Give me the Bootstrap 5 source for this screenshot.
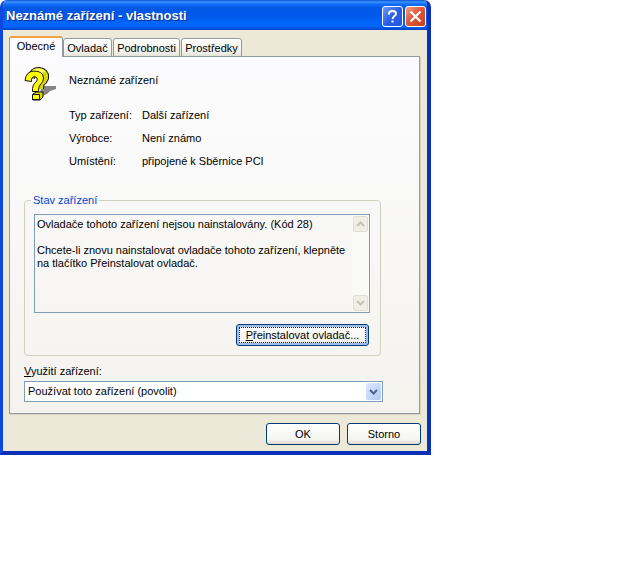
<!DOCTYPE html>
<html lang="cs">
<head>
<meta charset="utf-8">
<meta name="viewport" content="width=device-width, initial-scale=1">
<title>Neznámé zařízení - vlastnosti</title>
<link href="https://cdn.jsdelivr.net/npm/bootstrap@5.3.0/dist/css/bootstrap.min.css" rel="stylesheet">
<style>
  body { background: #fff; color: #000; font: 11px/13px "Liberation Sans", Arial, sans-serif; }
  .dialog { max-width: 431px; background: #ece9d8; border: solid #0a48e0; border-width: 0 4px 4px 3px; border-radius: 7px 7px 0 0; border-right-color: #0831b8; border-bottom-color: #0831b8; overflow: hidden; }
  .titlebar { height: 30px; margin: 0 -4px 0 -3px; padding: 2px 5px 0 6px; background: linear-gradient(#0a50d0 0, #3c94ff 2px, #1470f8 4px, #0058e6 8px, #0058ea 16px, #0068ff 24px, #0062f4 27px, #0040c4 30px); }
  .titlebar h1 { font: bold 13px/18px "Liberation Sans", sans-serif; color: #fff; text-shadow: 1px 1px #0a2c8c; }
  .cap { width: 21px; height: 21px; padding: 0; border: 1px solid #fff; border-radius: 3px; background: linear-gradient(135deg, #6e9cf8, #2a5fe6 50%, #2458d8); }
  .cap-help { margin-right: 2px; }
  .cap-close { background: linear-gradient(135deg, #f0a088, #e0583a 45%, #cc3c18); }
  .cap svg { display: block; margin: auto; }
  .client { padding: 6px; }
  .sheet-tabs { position: relative; z-index: 1; margin-bottom: -1px; }
  .sheet-tab { height: 19px; padding: 1px 0 0; border: 1px solid #919b9c; border-radius: 3px 3px 0 0; background: linear-gradient(#fff, #f0f0ea 80%, #e4e2d6); color: #000; text-align: center; width: 67px; margin-right: 1px; }
  .sheet-tab.active { height: 21px; width: 54px; margin-right: 0; padding-bottom: 3px; background: #fcfcfe; border-bottom: 0; border-top: 2px solid #f0a040; }
  .tab-s { width: 49px; }
  .tab-m { width: 61px; margin-right: 0; }
  .sheet { border: 1px solid #919b9c; background: linear-gradient(#fcfcfe, #f4f3ee); padding: 10px 36px 11px 14px; margin-right: 1px; box-shadow: 1px 1px #d8d4c4; }
  .info { margin-bottom: 26px; }
  .facts { display: grid; grid-template-columns: 73px 1fr; row-gap: 10px; margin: 22px 0 0; }
  .facts dt { font-weight: 400; }
  .facts dd { margin: 0; }
  .device { width: 45px; flex: none; }
  .device svg { display: block; }
  .device-name { padding-top: 7px; }
  .group { border: 1px solid #d0d0bf; border-radius: 4px; padding: 7px 10px 9px 9px; margin-right: 2px; }
  .group legend { float: none; width: auto; font-size: 11px; line-height: 13px; color: #0046d5; margin: 0; padding: 0 2px; margin-left: -3px; }
  .status { border: 1px solid #7f9db9; margin-bottom: 11px; }
  .status textarea { flex: 1; min-width: 0; height: 97px; padding: 3px 0 0 2px; border: 0; outline: 0; resize: none; overflow: hidden; background: transparent; color: #000; font: inherit; }
  .scroller { width: 17px; background: #fafaf7; padding: 1px; }
  .scroller button { width: 15px; height: 16px; padding: 0; border: 1px solid #e0dfd2; border-radius: 2px; background: #f0efe6; line-height: 0; }
  .push { height: 22px; width: 74px; padding: 0; border: 1px solid #003c74; border-radius: 3px; background: linear-gradient(#fff, #f3f3ef 80%, #dcd8cc); color: #000; }
  .push-focus { width: 133px; margin-right: 1px; box-shadow: inset 0 0 0 2px #a0bcec; outline: 1px dotted #222; outline-offset: -4px; }
  .usage-label { margin-top: 9px; margin-bottom: 3px; }
  .usage { display: block; height: 21px; width: 100%; appearance: none; border: 1px solid #7f9db9; border-radius: 0; background: #fff; color: #000; padding: 0 20px 0 3px; font: inherit; }
  .drop { top: 2px; right: 2px; width: 15px; height: 17px; border-radius: 2px; background: linear-gradient(135deg, #dce8ff, #b0c8f8); pointer-events: none; line-height: 0; }
  .actions { gap: 7px; padding-top: 9px; }
</style>
<script src="https://cdn.jsdelivr.net/npm/bootstrap@5.3.0/dist/js/bootstrap.bundle.min.js"></script>
</head>
<body>
<main class="dialog">
  <header class="titlebar d-flex align-items-center">
    <h1 class="m-0 me-auto">Neznámé zařízení - vlastnosti</h1>
    <div class="d-flex">
      <button type="button" class="cap cap-help" aria-label="Nápověda"><svg width="17" height="17" viewBox="0 0 17 17" fill="none" stroke="#fff" stroke-width="2"><path d="M5 6.500V5.500Q5 3 8.500 3T12 5.500Q12 7 10.500 8T8.500 11"/><path d="M8.500 12.500v2"/></svg></button>
      <button type="button" class="cap cap-close" aria-label="Zavřít"><svg width="17" height="17" viewBox="0 0 17 17" stroke="#fff" stroke-width="2.200"><path d="M3.500 3.500l10 10M13.500 3.500l-10 10"/></svg></button>
    </div>
  </header>
  <div class="client">
    <div class="sheet-tabs d-flex align-items-end" role="tablist">
      <button type="button" class="sheet-tab active" role="tab" aria-selected="true">Obecné</button>
      <button type="button" class="sheet-tab tab-s" role="tab" aria-selected="false">Ovladač</button>
      <button type="button" class="sheet-tab" role="tab" aria-selected="false">Podrobnosti</button>
      <button type="button" class="sheet-tab tab-m" role="tab" aria-selected="false">Prostředky</button>
    </div>
    <section class="sheet" role="tabpanel">
      <div class="info d-flex">
        <div class="device">
          <svg width="33" height="35" viewBox="0 0 33 35" fill="none" aria-hidden="true">
            <path d="M16 27l1-6 4-2h11v3l-6 2-3 3-5 2z" fill="#858585"/>
            <path d="M7 11Q9 4 15 4Q22 5 21 11Q20 14 17 16Q16 18 16 22" stroke="#111" stroke-width="8"/>
            <path d="M7 11Q9 4 15 4Q22 5 21 11Q20 14 17 16Q16 18 16 22" stroke="#d8d410" stroke-width="6"/>
            <path d="M9 27l3-2h7v5l-3 3H9z" fill="#d8d410" stroke="#111"/>
            <path d="M1 13.500Q2 4.500 10 4Q19 4 19.500 11Q19.500 15 16 18Q14.500 19.500 14.500 24.500H8.500Q8 18 12 15Q14 13 13 11Q11.500 9 9 10Q7 11 7.500 14.500Z" fill="#ff0" stroke="#111"/>
            <path d="M8.500 27.500h7v5h-7z" fill="#ff0" stroke="#111"/>
            <path d="M7 3.500Q11 1 16 1.500Q20 2 21 4L18 6Q14 2.500 7 3.500Z" fill="#ffff60"/>
          </svg>
        </div>
        <div class="flex-grow-1">
          <div class="device-name">Neznámé zařízení</div>
          <dl class="facts">
            <dt>Typ zařízení:</dt><dd>Další zařízení</dd>
            <dt>Výrobce:</dt><dd>Není známo</dd>
            <dt>Umístění:</dt><dd>připojené k Sběrnice PCI</dd>
          </dl>
        </div>
      </div>
      <fieldset class="group">
        <legend id="state">Stav zařízení</legend>
        <div class="status d-flex">
          <textarea readonly aria-labelledby="state">Ovladače tohoto zařízení nejsou nainstalovány. (Kód 28)

Chcete-li znovu nainstalovat ovladače tohoto zařízení, klepněte na tlačítko Přeinstalovat ovladač.</textarea>
          <div class="scroller d-flex flex-column justify-content-between">
            <button type="button" disabled aria-label="Nahoru"><svg width="9" height="8" viewBox="0 0 9 8" fill="none" stroke="#c5c4b6" stroke-width="2"><path d="M1 6l3.500-3.500L8 6"/></svg></button>
            <button type="button" disabled aria-label="Dolů"><svg width="9" height="8" viewBox="0 0 9 8" fill="none" stroke="#c5c4b6" stroke-width="2"><path d="M1 2l3.500 3.500L8 2"/></svg></button>
          </div>
        </div>
        <div class="d-flex justify-content-end"><button type="button" class="push push-focus"><u>P</u>řeinstalovat ovladač...</button></div>
      </fieldset>
      <label class="usage-label d-block" for="usage"><u>V</u>yužití zařízení:</label>
      <div class="position-relative">
        <select id="usage" class="usage"><option>Používat toto zařízení (povolit)</option></select>
        <span class="drop position-absolute d-flex align-items-center justify-content-center"><svg width="9" height="8" viewBox="0 0 9 8" fill="none" stroke="#4d6185" stroke-width="2"><path d="M1 2l3.500 3.500L8 2"/></svg></span>
      </div>
    </section>
    <div class="actions d-flex justify-content-end">
      <button type="button" class="push">OK</button>
      <button type="button" class="push">Storno</button>
    </div>
  </div>
</main>
</body>
</html>
